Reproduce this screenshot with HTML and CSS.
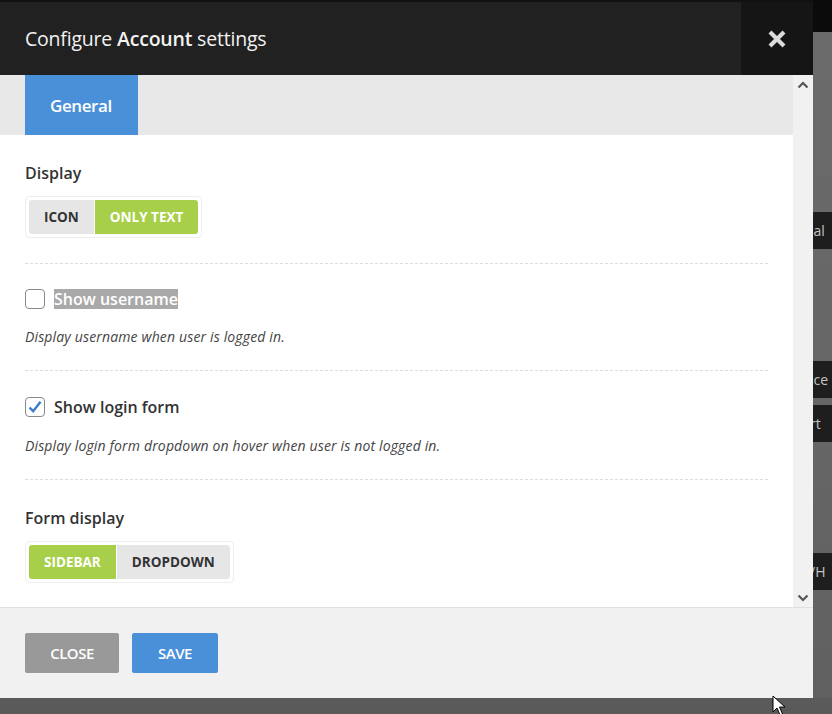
FILE: index.html
```html
<!DOCTYPE html>
<html lang="en">
<head>
<meta charset="utf-8">
<title>Configure Account settings</title>
<link rel="stylesheet" href="styles.css">
</head>
<body>
    <div class="page">
        <div class="modal">
            <div class="modal-header">
                <h3 class="modal-title">Configure <b>Account</b> settings</h3>
                <div class="modal-close">
                    <svg width="20" height="20" viewBox="0 0 20 20"><path d="M3 3 L17 17 M17 3 L3 17" stroke="#dcdcdc" stroke-width="4.2" stroke-linecap="butt"/></svg>
                </div>
            </div>

            <div class="modal-main">
                <div class="modal-scroll">
                    <div class="tabs">
                        <span class="tab active">General</span>
                    </div>

                    <div class="content">
                        <div class="field">
                            <div class="label">Display</div>
                            <div class="toggle-group">
                                <span class="toggle">ICON</span>
                                <span class="toggle on">ONLY TEXT</span>
                            </div>
                        </div>

                        <div class="field check-field">
                            <div class="check-row">
                                <span class="checkbox"></span>
                                <span class="label selected">Show username</span>
                            </div>
                            <div class="desc">Display username when user is logged in.</div>
                        </div>

                        <div class="field check-field">
                            <div class="check-row">
                                <span class="checkbox">
                                    <svg width="16" height="16" viewBox="0 0 16 16"><path d="M2.5 8.5 L6.2 12.2 L13.5 2.8" fill="none" stroke="#3a7fc8" stroke-width="2.4"/></svg>
                                </span>
                                <span class="label">Show login form</span>
                            </div>
                            <div class="desc">Display login form dropdown on hover when user is not logged in.</div>
                        </div>

                        <div class="field last">
                            <div class="label">Form display</div>
                            <div class="toggle-group">
                                <span class="toggle on">SIDEBAR</span>
                                <span class="toggle">DROPDOWN</span>
                            </div>
                        </div>
                    </div>
                </div>

                <div class="scrollbar">
                    <svg width="12" height="8" viewBox="0 0 12 8"><path d="M1.5 6.5 L6 2 L10.5 6.5" fill="none" stroke="#555" stroke-width="2.2"/></svg>
                    <svg width="12" height="8" viewBox="0 0 12 8"><path d="M1.5 1.5 L6 6 L10.5 1.5" fill="none" stroke="#555" stroke-width="2.2"/></svg>
                </div>
            </div>

            <div class="modal-footer">
                <button class="btn btn-close">CLOSE</button>
                <button class="btn btn-save">SAVE</button>
            </div>
        </div>

        <div class="backdrop">
            <div class="backdrop-top"></div>
            <div class="bar bar-1">ial</div>
            <div class="bar bar-2">ice</div>
            <div class="bar bar-3">rt</div>
            <div class="bar bar-4">/H</div>
        </div>
    </div>

    <svg class="cursor" width="14" height="22" viewBox="0 0 14 22"><path d="M1 1 L1 17 L5 13 L8 20 L10.5 19 L7.5 12 L13 12 Z" fill="#fff" stroke="#000" stroke-width="1"/></svg>
</body>
</html>
```

FILE: styles.css
```css
html, body {
    margin: 0;
    padding: 0;
}

body {
    width: 832px;
    height: 714px;
    overflow: hidden;
    background: #5a5a5a;
    font-family: "Open Sans", "Noto Sans", sans-serif;
    color: #333;
    position: relative;
}

.page {
    display: flex;
    height: 698px;
}

.modal {
    width: 813px;
    display: flex;
    flex-direction: column;
    background: #f1f1f1;
}

.modal-header {
    height: 73px;
    border-top: 2px solid #111;
    background: #212121;
    display: flex;
    align-items: center;
    justify-content: space-between;
}

.modal-title {
    margin: 0 0 0 25px;
    font-size: 19.5px;
    font-weight: 400;
    color: #f2f2f2;
    letter-spacing: -0.2px;
}

.modal-title b {
    font-weight: 600;
}

.modal-close {
    width: 72px;
    height: 73px;
    background: #151515;
    display: flex;
    align-items: center;
    justify-content: center;
}

.modal-main {
    display: flex;
    height: 532px;
    border-bottom: 1px solid #e0e0e0;
}

.modal-scroll {
    width: 793px;
    background: #fff;
    overflow: hidden;
}

.scrollbar {
    width: 20px;
    background: #f1f1f1;
    display: flex;
    flex-direction: column;
    justify-content: space-between;
    align-items: center;
    padding: 6px 0 5px;
    box-sizing: border-box;
}

.tabs {
    height: 60px;
    background: #e8e8e8;
    padding-left: 25px;
    display: flex;
}

.tab {
    display: flex;
    align-items: center;
    padding: 0 26px 0 25px;
    font-size: 17px;
    font-weight: 600;
    letter-spacing: -0.4px;
}

.tab.active {
    background: #4a90d9;
    color: #fff;
}

.content {
    padding: 0 25px;
}

.field {
    border-bottom: 1px dashed #dcdcdc;
    padding: 27px 0 25px;
}

.field.check-field {
    padding: 25px 0 24px;
}

.field.last {
    border-bottom: none;
}

.label {
    font-size: 16px;
    font-weight: 600;
    color: #333;
    line-height: 22px;
}

.toggle-group {
    display: inline-flex;
    margin-top: 12px;
    padding: 3px;
    border: 1px solid #eee;
    border-radius: 4px;
    gap: 1px;
}

.toggle {
    height: 34px;
    display: flex;
    align-items: center;
    padding: 0 15px;
    font-size: 13.5px;
    font-weight: 700;
    color: #333;
    background: #e6e6e7;
}

.toggle:first-child {
    border-radius: 3px 0 0 3px;
}

.toggle:last-child {
    border-radius: 0 3px 3px 0;
}

.toggle.on {
    background: #a7cf49;
    color: #fff;
}

.check-row {
    display: flex;
    align-items: center;
    gap: 9px;
}

.checkbox {
    width: 18px;
    height: 18px;
    border: 1px solid #888;
    border-radius: 4px;
    display: flex;
    align-items: center;
    justify-content: center;
}

.label.selected {
    background: #a9a9a9;
    color: #fff;
    line-height: 20px;
}

.desc {
    margin-top: 18px;
    font-size: 14px;
    line-height: 19px;
    font-style: italic;
    letter-spacing: 0.15px;
    color: #444;
}

.modal-footer {
    flex: 1;
    display: flex;
    align-items: center;
    gap: 13px;
    padding: 0 25px;
    background: #f1f1f1;
}

.btn {
    height: 40px;
    border: none;
    border-radius: 2px;
    font-family: "Open Sans", "Noto Sans", sans-serif;
    font-size: 15px;
    font-weight: 600;
    color: #fff;
    letter-spacing: -0.5px;
}

.btn-close {
    width: 94px;
    background: #999;
}

.btn-save {
    width: 86px;
    background: #4a90d9;
}

.backdrop {
    flex: 1;
    background: linear-gradient(#6b6b6b, #666 60%, #606060);
    overflow: hidden;
    position: relative;
    font-size: 14px;
    color: #c4c4c4;
}

.backdrop-top {
    height: 32px;
    background: #0b0b0b;
}

.bar {
    background: #1e1e1e;
    height: 37px;
    line-height: 37px;
    text-indent: -3px;
    white-space: nowrap;
}

.bar-1 { margin-top: 180px; }
.bar-2 { margin-top: 112px; }
.bar-3 { margin-top: 7px; }
.bar-4 { margin-top: 111px; }

.cursor {
    position: absolute;
    left: 772px;
    top: 695px;
}
```
